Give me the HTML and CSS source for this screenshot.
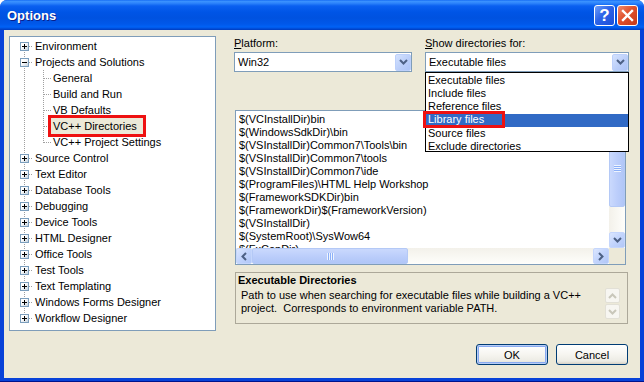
FILE: index.html
```html
<!DOCTYPE html>
<html>
<head>
<meta charset="utf-8">
<title>Options</title>
<link rel="stylesheet" href="styles.css">
</head>
<body>
<div class="window">
  <div class="titlebar">
    <span class="title">Options</span>
    <div class="tbtns">
      <span class="tb help">?</span>
      <span class="tb close"><svg width="13" height="13" viewBox="0 0 13 13"><path d="M2 2l9 9M11 2l-9 9" stroke="#fff" stroke-width="2.4" stroke-linecap="square"/></svg></span>
    </div>
  </div>
  <div class="client">
    <div class="main">
      <div class="tree">
        <div class="row"><span class="g r first"><i class="pb"><svg width="7" height="7" viewBox="0 0 7 7"><path d="M1 3.5h5M3.5 1v5" stroke="#000"/></svg></i></span><span class="t">Environment</span></div>
        <div class="row"><span class="g r"><i class="pb"><svg width="7" height="7" viewBox="0 0 7 7"><path d="M1 3.5h5" stroke="#000"/></svg></i></span><span class="t">Projects and Solutions</span></div>
        <div class="row"><span class="g v"></span><span class="g c"></span><span class="t">General</span></div>
        <div class="row"><span class="g v"></span><span class="g c"></span><span class="t">Build and Run</span></div>
        <div class="row"><span class="g v"></span><span class="g c"></span><span class="t">VB Defaults</span></div>
        <div class="row"><span class="g v"></span><span class="g c"></span><span class="t sel">VC++ Directories</span></div>
        <div class="row"><span class="g v"></span><span class="g c end"></span><span class="t">VC++ Project Settings</span></div>
        <div class="row"><span class="g r"><i class="pb"><svg width="7" height="7" viewBox="0 0 7 7"><path d="M1 3.5h5M3.5 1v5" stroke="#000"/></svg></i></span><span class="t">Source Control</span></div>
        <div class="row"><span class="g r"><i class="pb"><svg width="7" height="7" viewBox="0 0 7 7"><path d="M1 3.5h5M3.5 1v5" stroke="#000"/></svg></i></span><span class="t">Text Editor</span></div>
        <div class="row"><span class="g r"><i class="pb"><svg width="7" height="7" viewBox="0 0 7 7"><path d="M1 3.5h5M3.5 1v5" stroke="#000"/></svg></i></span><span class="t">Database Tools</span></div>
        <div class="row"><span class="g r"><i class="pb"><svg width="7" height="7" viewBox="0 0 7 7"><path d="M1 3.5h5M3.5 1v5" stroke="#000"/></svg></i></span><span class="t">Debugging</span></div>
        <div class="row"><span class="g r"><i class="pb"><svg width="7" height="7" viewBox="0 0 7 7"><path d="M1 3.5h5M3.5 1v5" stroke="#000"/></svg></i></span><span class="t">Device Tools</span></div>
        <div class="row"><span class="g r"><i class="pb"><svg width="7" height="7" viewBox="0 0 7 7"><path d="M1 3.5h5M3.5 1v5" stroke="#000"/></svg></i></span><span class="t">HTML Designer</span></div>
        <div class="row"><span class="g r"><i class="pb"><svg width="7" height="7" viewBox="0 0 7 7"><path d="M1 3.5h5M3.5 1v5" stroke="#000"/></svg></i></span><span class="t">Office Tools</span></div>
        <div class="row"><span class="g r"><i class="pb"><svg width="7" height="7" viewBox="0 0 7 7"><path d="M1 3.5h5M3.5 1v5" stroke="#000"/></svg></i></span><span class="t">Test Tools</span></div>
        <div class="row"><span class="g r"><i class="pb"><svg width="7" height="7" viewBox="0 0 7 7"><path d="M1 3.5h5M3.5 1v5" stroke="#000"/></svg></i></span><span class="t">Text Templating</span></div>
        <div class="row"><span class="g r"><i class="pb"><svg width="7" height="7" viewBox="0 0 7 7"><path d="M1 3.5h5M3.5 1v5" stroke="#000"/></svg></i></span><span class="t">Windows Forms Designer</span></div>
        <div class="row"><span class="g r last"><i class="pb"><svg width="7" height="7" viewBox="0 0 7 7"><path d="M1 3.5h5M3.5 1v5" stroke="#000"/></svg></i></span><span class="t">Workflow Designer</span></div>
      </div>
      <div class="right">
        <div class="combos">
          <div class="field plat">
            <div class="lbl"><u>P</u>latform:</div>
            <div class="combo"><span class="val">Win32</span><span class="ddbtn"><svg width="9" height="6" viewBox="0 0 9 6"><path d="M1 1l3.5 3.5L8 1" fill="none" stroke="#4d6185" stroke-width="2"/></svg></span></div>
          </div>
          <div class="field show">
            <div class="lbl"><u>S</u>how directories for:</div>
            <div class="combo"><span class="val">Executable files</span><span class="ddbtn"><svg width="9" height="6" viewBox="0 0 9 6"><path d="M1 1l3.5 3.5L8 1" fill="none" stroke="#4d6185" stroke-width="2"/></svg></span>
              <div class="droplist">
                <div class="di">Executable files</div>
                <div class="di">Include files</div>
                <div class="di">Reference files</div>
                <div class="di on"><span class="mark">Library files</span></div>
                <div class="di">Source files</div>
                <div class="di">Exclude directories</div>
              </div>
            </div>
          </div>
        </div>
        <div class="listbox">
          <div class="lb-top">
            <div class="lb-items">
              <div>$(VCInstallDir)bin</div>
              <div>$(WindowsSdkDir)\bin</div>
              <div>$(VSInstallDir)Common7\Tools\bin</div>
              <div>$(VSInstallDir)Common7\tools</div>
              <div>$(VSInstallDir)Common7\ide</div>
              <div>$(ProgramFiles)\HTML Help Workshop</div>
              <div>$(FrameworkSDKDir)bin</div>
              <div>$(FrameworkDir)$(FrameworkVersion)</div>
              <div>$(VSInstallDir)</div>
              <div>$(SystemRoot)\SysWow64</div>
              <div>$(FxCopDir)</div>
            </div>
            <div class="vscroll">
              <span class="sbtn"><svg width="9" height="6" viewBox="0 0 9 6"><path d="M1 5l3.5-3.5L8 5" fill="none" stroke="#4d6185" stroke-width="2"/></svg></span>
              <span class="thumb v"><i class="grip gv"></i></span>
              <span class="track"></span>
              <span class="sbtn"><svg width="9" height="6" viewBox="0 0 9 6"><path d="M1 1l3.5 3.5L8 1" fill="none" stroke="#4d6185" stroke-width="2"/></svg></span>
            </div>
          </div>
          <div class="hscroll">
            <span class="sbtn"><svg width="6" height="9" viewBox="0 0 6 9"><path d="M5 1L1.5 4.5 5 8" fill="none" stroke="#4d6185" stroke-width="2"/></svg></span>
            <span class="thumb h"><i class="grip gh"></i></span>
            <span class="track"></span>
            <span class="sbtn"><svg width="6" height="9" viewBox="0 0 6 9"><path d="M1 1l3.5 3.5L1 8" fill="none" stroke="#4d6185" stroke-width="2"/></svg></span>
            <span class="corner"></span>
          </div>
        </div>
        <div class="desc">
          <div class="desc-text">
            <div class="desc-title">Executable Directories</div>
            <div class="desc-body">Path to use when searching for executable files while building a VC++<br>project.&nbsp; Corresponds to environment variable PATH.</div>
          </div>
          <div class="desc-btns">
            <span class="dbtn"><svg width="9" height="6" viewBox="0 0 9 6"><path d="M1 5l3.5-3.5L8 5" fill="none" stroke="#c9c7ba" stroke-width="2"/></svg></span>
            <span class="dbtn"><svg width="9" height="6" viewBox="0 0 9 6"><path d="M1 1l3.5 3.5L8 1" fill="none" stroke="#c9c7ba" stroke-width="2"/></svg></span>
          </div>
        </div>
      </div>
    </div>
    <div class="buttons">
      <button class="btn def">OK</button>
      <button class="btn">Cancel</button>
    </div>
  </div>
</div>
</body>
</html>
```

FILE: styles.css
```css
html, body { margin: 0; padding: 0; background: #ffffff; }
body { font-family: "Liberation Sans", Arial, sans-serif; font-size: 11px; color: #000; }

.window {
  width: 644px; height: 382px; box-sizing: border-box;
  background: #0842d8;
  border-radius: 7px 7px 0 0;
  display: flex; flex-direction: column;
  overflow: hidden;
  border-bottom: 1px solid #00138c;
}

.titlebar {
  height: 30px; flex: none; box-sizing: border-box;
  display: flex; align-items: center; justify-content: space-between;
  padding: 0 6px 0 7px;
  background: linear-gradient(to bottom, #0a5ff0 0px, #3d95ff 1px, #2f86fc 3px, #0a60f0 6px, #0055e6 12px, #0052e0 18px, #0058ea 24px, #0062f6 27px, #0048d2 29px, #003bbd 30px);
}
.title {
  color: #fff; font-weight: bold; font-size: 13px;
  font-family: "Liberation Sans", Arial, sans-serif;
  text-shadow: 1px 1px 0 #0a1f8a;
  margin-top: 1px;
}
.tbtns { display: flex; gap: 2px; margin-top: 1px; }
.tb {
  width: 21px; height: 21px; box-sizing: border-box;
  border: 1px solid #fff; border-radius: 3px;
  display: flex; align-items: center; justify-content: center;
  color: #fff; font-weight: bold; font-size: 17px;
}
.tb.help { background: linear-gradient(135deg, #6e9df8 0%, #2b63e8 45%, #1c4fd8 100%); }
.tb.close { background: linear-gradient(135deg, #f08c6e 0%, #e0502c 45%, #c4391a 100%); }

.client {
  flex: 1;
  margin: 0 4px 3px 4px;
  background: #ece9d8;
  padding: 6px 0 0 5px;
  display: flex; flex-direction: column;
}
.main { display: flex; }

.tree {
  width: 207px; height: 295px; box-sizing: border-box; flex: none;
  border: 1px solid #7f9db9; background: #fff;
  padding: 1px 0 0 6px;
  margin-right: 18px;
}
.row { display: flex; align-items: center; height: 16px; }
.g { width: 16px; height: 16px; flex: none; box-sizing: border-box; padding: 4px 0 0 4px; }
.g.r {
  background:
    repeating-linear-gradient(to bottom, #a0a0a0 0 1px, transparent 1px 2px) 8px 0 / 1px 16px no-repeat,
    repeating-linear-gradient(to right, #a0a0a0 0 1px, transparent 1px 2px) 9px 8px / 7px 1px no-repeat;
}
.g.r.first {
  background:
    repeating-linear-gradient(to bottom, #a0a0a0 0 1px, transparent 1px 2px) 8px 8px / 1px 8px no-repeat,
    repeating-linear-gradient(to right, #a0a0a0 0 1px, transparent 1px 2px) 9px 8px / 7px 1px no-repeat;
}
.g.r.last {
  background:
    repeating-linear-gradient(to bottom, #a0a0a0 0 1px, transparent 1px 2px) 8px 0 / 1px 9px no-repeat,
    repeating-linear-gradient(to right, #a0a0a0 0 1px, transparent 1px 2px) 9px 8px / 7px 1px no-repeat;
}
.g.v {
  background: repeating-linear-gradient(to bottom, #a0a0a0 0 1px, transparent 1px 2px) 8px 0 / 1px 16px no-repeat;
}
.g.c {
  margin-left: 3px;
  background:
    repeating-linear-gradient(to bottom, #a0a0a0 0 1px, transparent 1px 2px) 8px 0 / 1px 16px no-repeat,
    repeating-linear-gradient(to right, #a0a0a0 0 1px, transparent 1px 2px) 9px 8px / 7px 1px no-repeat;
}
.g.c.end {
  background:
    repeating-linear-gradient(to bottom, #a0a0a0 0 1px, transparent 1px 2px) 8px 0 / 1px 9px no-repeat,
    repeating-linear-gradient(to right, #a0a0a0 0 1px, transparent 1px 2px) 9px 8px / 7px 1px no-repeat;
}
.pb {
  display: block; width: 9px; height: 9px; box-sizing: border-box;
  border: 1px solid #7b9ebd;
  background: linear-gradient(135deg, #ffffff 35%, #c6d2dd 100%);
}
.pb svg { display: block; }
.t { padding: 0 2px; line-height: 16px; white-space: nowrap; }
.g.r + .t { margin-left: 1px; }
.t.sel {
  display: inline-block; width: 92px; box-sizing: border-box; height: 16px;
  background: #ece9d8;
  outline: 3px solid #ee1111;
}

.right { display: flex; flex-direction: column; }
.combos { display: flex; gap: 13px; }
.field { display: flex; flex-direction: column; }
.field.plat { width: 178px; }
.field.show { width: 204px; }
.lbl { line-height: 14px; height: 14px; margin-bottom: 2px; white-space: nowrap; }
.combo {
  position: relative;
  height: 20px; box-sizing: border-box;
  border: 1px solid #7f9db9; background: #fff;
  display: flex; align-items: center; justify-content: space-between;
  padding: 0 0 0 3px;
}
.val { white-space: nowrap; }
.ddbtn {
  width: 16px; height: 17px; box-sizing: border-box; margin-right: 0px;
  border: 1px solid #bcd0fb; border-radius: 2px;
  background: linear-gradient(135deg, #d4e2fe 0%, #b9cdf9 60%, #adc4f6 100%);
  display: flex; align-items: center; justify-content: center;
}
.droplist {
  position: absolute; top: 19px; left: -1px;
  width: 204px; height: 80px; box-sizing: border-box;
  border: 1px solid #000; background: #fff;
  padding-top: 1px;
  z-index: 5;
}
.di { height: 13px; line-height: 13px; padding-left: 2px; white-space: nowrap; }
.di.on { background: #316ac5; color: #fff; padding-left: 0; }
.mark {
  display: block; width: 76px; height: 11px; line-height: 11px;
  margin-top: 1px; padding-left: 2px; box-sizing: border-box;
  outline: 3px solid #ee1111;
}

.listbox {
  margin: 38px 0 0 1px;
  width: 391px; height: 155px; box-sizing: border-box;
  border: 1px solid #7f9db9; background: #fff;
  display: flex; flex-direction: column;
}
.lb-top { flex: 1; display: flex; min-height: 0; }
.lb-items { flex: 1; overflow: hidden; padding: 2px 0 0 3px; line-height: 13px; white-space: nowrap; }
.vscroll {
  width: 16px; flex: none; display: flex; flex-direction: column;
  background: linear-gradient(to right, #f3f1ea, #fefefb);
}
.hscroll {
  height: 16px; flex: none; display: flex;
  background: linear-gradient(to bottom, #f3f1ea, #fefefb);
}
.sbtn {
  width: 16px; height: 16px; flex: none; box-sizing: border-box;
  border: 1px solid #c5d6fc; border-radius: 2px;
  background: linear-gradient(135deg, #dbe6fe 0%, #c2d4fc 50%, #b1c7f7 100%);
  display: flex; align-items: center; justify-content: center;
}
.thumb {
  box-sizing: border-box; flex: none;
  border: 1px solid #b4c9f6; border-radius: 2px;
  display: flex; align-items: center; justify-content: center;
}
.thumb.v { height: 78px; margin-top: 2px; background: linear-gradient(to right, #cad9fd, #bccefb 50%, #b0c6f7); }
.thumb.h { width: 156px; background: linear-gradient(to bottom, #cad9fd, #bccefb 50%, #b0c6f7); }
.track { flex: 1; }
.grip { display: block; }
.gv { width: 7px; height: 7px; background: repeating-linear-gradient(to bottom, #eef4fe 0 1px, #8cb0f8 1px 2px); }
.gh { width: 7px; height: 7px; background: repeating-linear-gradient(to right, #eef4fe 0 1px, #8cb0f8 1px 2px); }
.corner { width: 16px; flex: none; background: #ece9d8; }

.desc {
  margin: 7px 0 0 1px;
  width: 393px; height: 52px; box-sizing: border-box;
  border: 1px solid #aca899;
  display: flex; justify-content: space-between;
  padding: 1px 7px 0 2px;
}
.desc-text { white-space: nowrap; }
.desc-title { font-weight: bold; line-height: 13px; margin-bottom: 2px; }
.desc-body { line-height: 13px; padding-left: 3px; }
.desc-btns { display: flex; flex-direction: column; gap: 1px; padding-top: 14px; }
.dbtn {
  width: 15px; height: 15px; box-sizing: border-box;
  border: 1px solid #e2e0d6; border-radius: 2px; background: #f7f6f1;
  display: flex; align-items: center; justify-content: center;
}

.buttons {
  display: flex; justify-content: flex-end; gap: 8px;
  margin-top: 13px; padding-right: 12px;
}
.btn {
  width: 72px; height: 21px; box-sizing: border-box;
  font-family: "Liberation Sans", Arial, sans-serif; font-size: 11px; color: #000;
  border: 1px solid #003c74; border-radius: 3px;
  background: linear-gradient(to bottom, #ffffff 0%, #f6f5f0 50%, #ecebe4 85%, #d6d0c5 100%);
  padding: 0;
}
.btn.def { box-shadow: inset 0 0 0 1px #b8cdf6, inset 0 0 0 2px #89aaf0; }
```
